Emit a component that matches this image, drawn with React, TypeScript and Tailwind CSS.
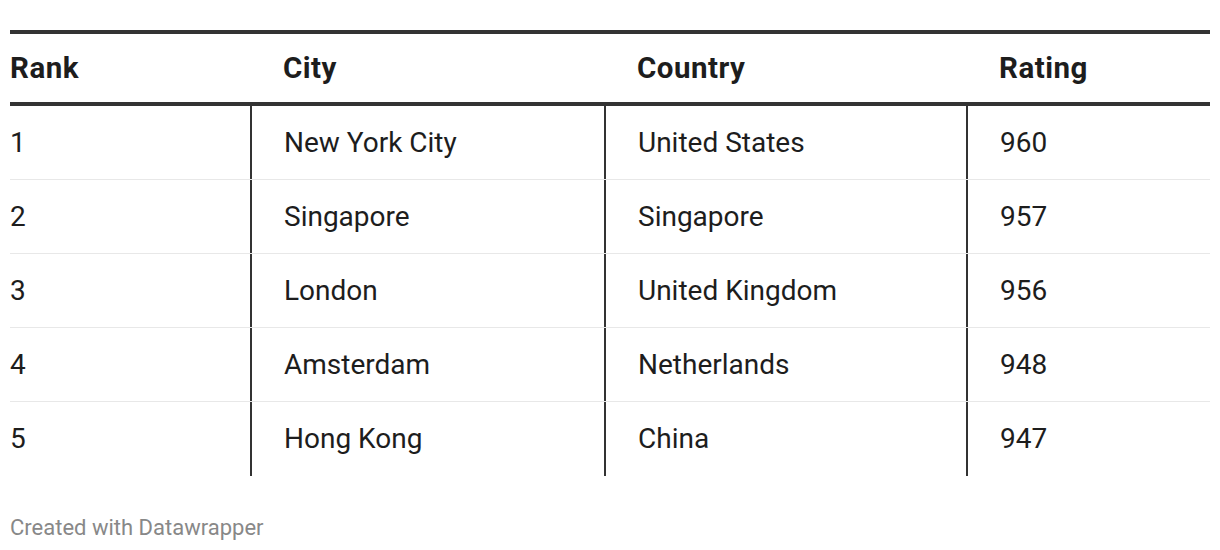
import React from "react";

const rows = [
  ["1", "New York City", "United States", "960"],
  ["2", "Singapore", "Singapore", "957"],
  ["3", "London", "United Kingdom", "956"],
  ["4", "Amsterdam", "Netherlands", "948"],
  ["5", "Hong Kong", "China", "947"],
];

const cols = ["w-[240px]", "w-[354px]", "w-[362px]", "flex-1"];

const App = () => {
  return (
    <div
      className="w-[1220px] h-[550px] bg-white px-[10px] pt-[30px]"
      style={{ fontFamily: "Roboto, 'Liberation Sans', sans-serif" }}
    >
      <div className="border-t-4 border-b-4 border-[#333] flex h-[76px] items-center text-[29.5px] tracking-[0.5px] font-bold text-[#1d1d1d]">
        {["Rank", "City", "Country", "Rating"].map((h, i) => (
          <div key={h} className={`${cols[i]} ${i > 0 ? "pl-[33px]" : ""}`}>
            {h}
          </div>
        ))}
      </div>
      <div>
        {rows.map((r, ri) => (
          <div
            key={ri}
            className={`flex h-[74px] text-[28px] text-[#1d1d1d] ${
              ri < rows.length - 1 ? "border-b border-[#e8e8e8]" : "h-[69px]"
            }`}
          >
            {r.map((c, i) => (
              <div
                key={i}
                className={`${cols[i]} flex items-center ${
                  i > 0 ? "pl-[32px] border-l-2 border-[#333]" : ""
                }`}
              >
                {c}
              </div>
            ))}
          </div>
        ))}
      </div>
      <div className="mt-[35px] text-[22px] text-[#888]">Created with Datawrapper</div>
    </div>
  );
};

export default App;
